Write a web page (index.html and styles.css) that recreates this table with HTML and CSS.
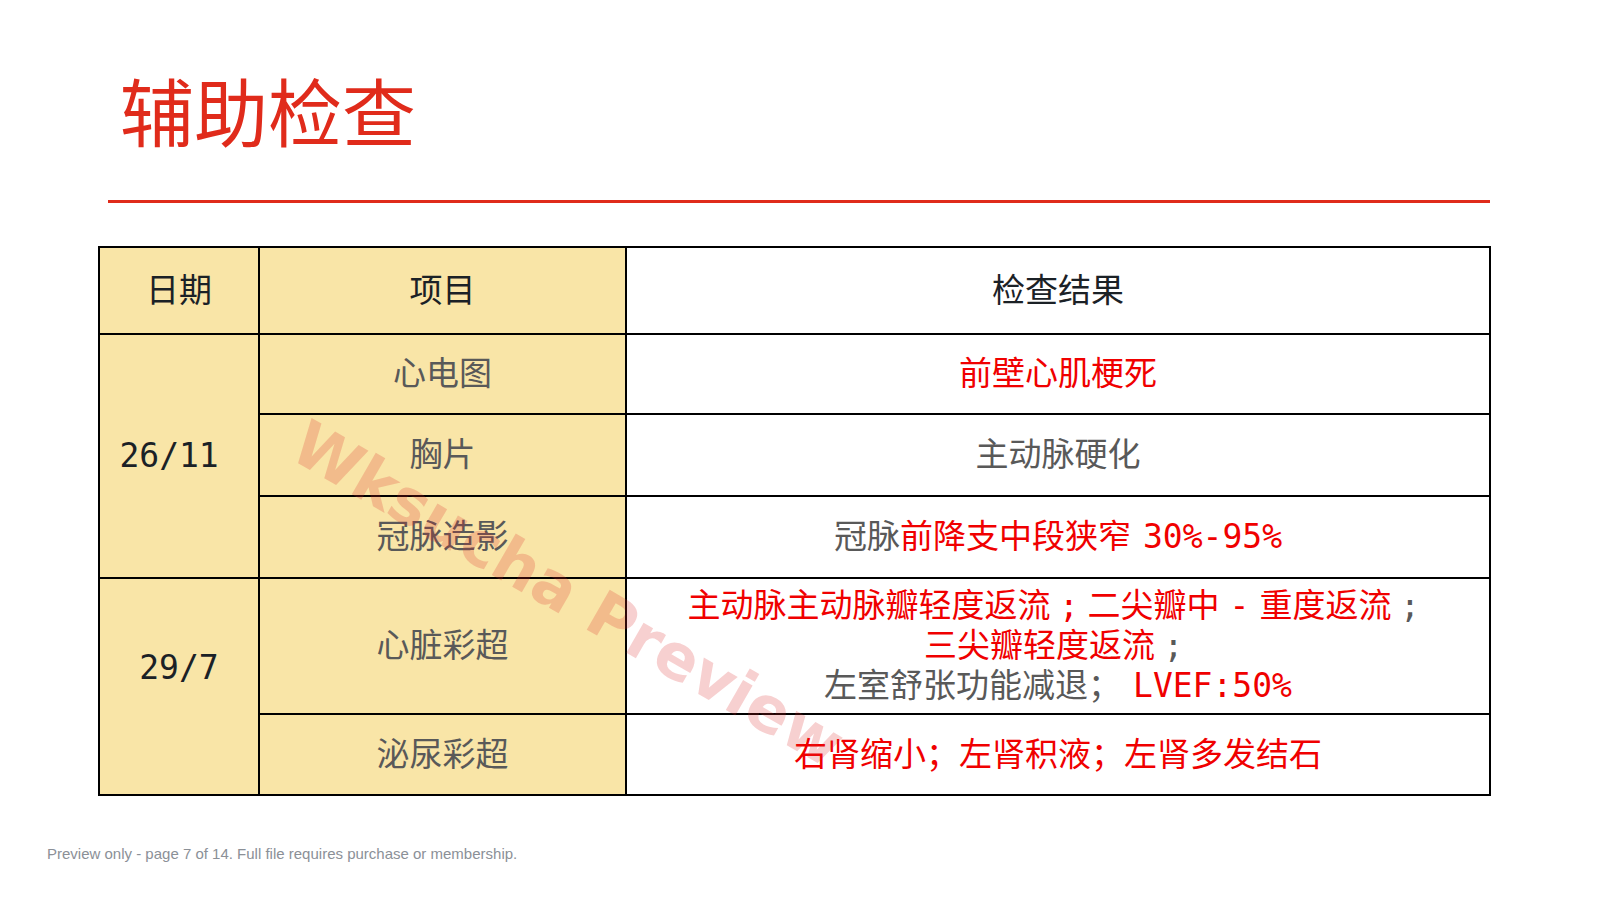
FILE: index.html
```html
<!DOCTYPE html>
<html lang="zh-CN">
<head>
<meta charset="utf-8">
<title>辅助检查</title>
<link rel="stylesheet" href="styles.css">
</head>
<body>
<div class="slide">
  <h1 class="title">辅助检查</h1>
  <div class="rule"></div>
  <table class="exam">
    <colgroup>
      <col class="c-date">
      <col class="c-item">
      <col class="c-res">
    </colgroup>
    <tr class="r-head">
      <th class="y dark">日期</th>
      <th class="y dark">项目</th>
      <th class="dark">检查结果</th>
    </tr>
    <tr class="r1">
      <td class="y dark" rowspan="3">26/11&nbsp;</td>
      <td class="y grey">心电图</td>
      <td class="red">前壁心肌梗死</td>
    </tr>
    <tr class="r2">
      <td class="y grey">胸片</td>
      <td class="grey">主动脉硬化</td>
    </tr>
    <tr class="r3">
      <td class="y grey">冠脉造影</td>
      <td><span class="grey">冠脉</span><span class="red">前降支中段狭窄<span class="thin"> </span>30%-95%</span></td>
    </tr>
    <tr class="r4">
      <td class="y dark date-up" rowspan="2">29/7</td>
      <td class="y grey">心脏彩超</td>
      <td><span class="red">主动脉主动脉瓣轻度返流<span class="semi">;</span>二尖瓣中<span class="dash">-</span>重度返流</span><span class="grey semi">;</span><br><span class="red">三尖瓣轻度返流</span><span class="grey semi">;</span><br><span class="grey">左室舒张功能减退；</span><span class="thin"> </span><span class="red">LVEF:50%</span></td>
    </tr>
    <tr class="r5">
      <td class="y grey">泌尿彩超</td>
      <td class="red">右肾缩小；左肾积液；左肾多发结石</td>
    </tr>
  </table>
  <div class="watermark">Wksucha Preview</div>
  <p class="footer">Preview only - page 7 of 14. Full file requires purchase or membership.</p>
</div>
</body>
</html>
```

FILE: styles.css
```css
html, body {
  margin: 0;
  padding: 0;
  background: #ffffff;
}

.slide {
  position: relative;
  width: 1601px;
  height: 900px;
  overflow: hidden;
  padding-top: 72px;
  box-sizing: border-box;
}

.title {
  margin: 0 0 0 120px;
  font-family: "Noto Sans CJK SC", sans-serif;
  font-weight: 400;
  font-size: 74px;
  line-height: 74px;
  color: #e02b1b;
}

.rule {
  margin: 54px 0 0 108px;
  width: 1382px;
  height: 3px;
  background: #e02b1b;
}

.exam {
  margin: 43px 0 0 98px;
  width: 1391px;
  border-collapse: collapse;
  table-layout: fixed;
  border: 2px solid #000;
  font-family: "DejaVu Sans Mono", "Noto Sans CJK SC", monospace;
  font-size: 33px;
  line-height: 40px;
}

.c-date { width: 160px; }
.c-item { width: 367px; }
.c-res { width: 864px; }

.exam th,
.exam td {
  border: 2px solid #000;
  padding: 0;
  text-align: center;
  vertical-align: middle;
  font-weight: 400;
  background: #ffffff;
}

.exam .y { background: #f9e5a7; }

.r-head { height: 87px; }
.r1 { height: 80px; }
.r2 { height: 82px; }
.r3 { height: 82px; }
.r4 { height: 136px; }
.r5 { height: 81px; }

.dark { color: #1b2126; }
.grey { color: #595959; }
.red { color: #f00000; }

.exam .date-up { padding-bottom: 37px; }

.semi {
  display: inline-block;
  width: 37px;
  text-align: center;
}

.dash {
  display: inline-block;
  width: 40px;
  text-align: center;
}

.thin {
  display: inline-block;
  width: 12px;
}

.watermark {
  position: absolute;
  left: 568px;
  top: 594px;
  transform: translate(-50%, -50%) rotate(30deg);
  font-family: "DejaVu Sans", sans-serif;
  font-weight: 700;
  font-size: 63px;
  line-height: 1;
  white-space: nowrap;
  color: rgba(220, 40, 40, 0.22);
  pointer-events: none;
}

.footer {
  position: absolute;
  left: 47px;
  top: 845px;
  margin: 0;
  font-family: "Liberation Sans", Arial, sans-serif;
  font-size: 15px;
  line-height: 18px;
  color: #8b9097;
}
```
